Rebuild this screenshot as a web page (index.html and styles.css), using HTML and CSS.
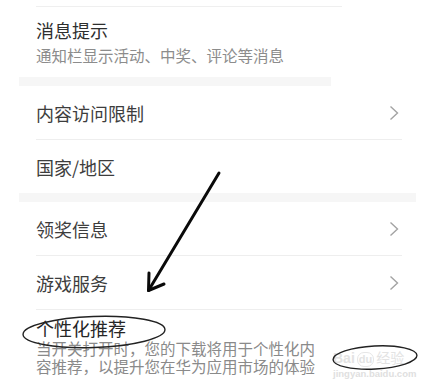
FILE: index.html
```html
<!DOCTYPE html>
<html lang="zh-CN">
<head>
<meta charset="utf-8">
<link rel="stylesheet" href="styles.css">
</head>
<body>
<div class="page">
  <section class="top">
    <div class="top-line"></div>
    <div class="notice">
      <div class="notice-title">消息提示</div>
      <div class="notice-sub">通知栏显示活动、中奖、评论等消息</div>
    </div>
    <div class="top-band"></div>
  </section>

  <section class="group">
    <div class="row"><span class="row-title">内容访问限制</span><svg class="chev" viewBox="0 0 10 16"><path d="M1.5 1.5 L8.5 8 L1.5 14.5"/></svg></div>
    <div class="divider"></div>
    <div class="row"><span class="row-title">国家/地区</span></div>
  </section>
  <div class="band"></div>

  <section class="group">
    <div class="row"><span class="row-title">领奖信息</span><svg class="chev" viewBox="0 0 10 16"><path d="M1.5 1.5 L8.5 8 L1.5 14.5"/></svg></div>
    <div class="divider"></div>
    <div class="row"><span class="row-title">游戏服务</span><svg class="chev" viewBox="0 0 10 16"><path d="M1.5 1.5 L8.5 8 L1.5 14.5"/></svg></div>
    <div class="divider"></div>
    <div class="item">
      <div class="item-title">个性化推荐</div>
      <div class="item-sub">当开关打开时，您的下载将用于个性化内</div>
      <div class="item-sub">容推荐，以提升您在华为应用市场的体验</div>
    </div>
  </section>

  <div class="watermark">
    <div class="wm-logo">Bai<span class="wm-du">du</span><span class="wm-cn">经验</span></div>
    <div class="wm-url">jingyan.baidu.com</div>
  </div>

  <svg class="annot" viewBox="0 0 442 390" width="442" height="390">
    <path d="M219 167 L148.5 284.5" />
    <path d="M149 267 L148.5 284.5 L164 278" />
    <ellipse cx="94" cy="326" rx="71" ry="15.5" transform="rotate(-2 94 326)" class="thin"/>
    <ellipse cx="375" cy="351.5" rx="42" ry="11.5" transform="rotate(-3 375 351.5)" class="thin"/>
  </svg>
</div>
</body>
</html>
```

FILE: styles.css
```css
html, body {
  margin: 0;
  padding: 0;
  background: #ffffff;
}
body {
  font-family: "Noto Sans CJK SC", "Noto Sans", sans-serif;
  width: 442px;
  height: 390px;
  overflow: hidden;
}
.page {
  position: relative;
  width: 442px;
  height: 390px;
}
.top-line {
  margin-left: 36px;
  margin-top: 6px;
  width: 306px;
  height: 1px;
  background: #efefef;
}
.notice {
  padding: 12px 0 11px 36px;
}
.notice-title {
  font-size: 18px;
  line-height: 22px;
  color: #2e2e2e;
}
.notice-sub {
  margin-top: 3px;
  font-size: 15.5px;
  line-height: 22px;
  color: #8c8c8c;
}
.top-band {
  margin-left: 19px;
  width: 312px;
  height: 9px;
  background: #f6f6f6;
}
.group {
  margin-left: 36px;
  width: 366px;
}
.row {
  height: 53px;
  display: flex;
  align-items: center;
  justify-content: space-between;
}
.row-title {
  font-size: 18px;
  line-height: 22px;
  color: #3d3d3d;
}
.chev {
  width: 10px;
  height: 16px;
  margin-right: 3px;
  fill: none;
  stroke: #a3a3a3;
  stroke-width: 1.4;
}
.divider {
  height: 1px;
  background: #eeeeee;
}
.band {
  margin-left: 19px;
  width: 397px;
  height: 9px;
  background: #f6f6f6;
}
.item {
  padding-top: 10px;
}
.item-title {
  font-family: "Liberation Sans", "Noto Sans CJK SC", sans-serif;
  font-size: 18px;
  line-height: 21px;
  color: #262626;
}
.item-sub {
  font-family: "Liberation Sans", "Noto Sans CJK SC", sans-serif;
  font-size: 15.5px;
  line-height: 17.5px;
  color: #8a8a8a;
  white-space: nowrap;
}
.watermark {
  position: absolute;
  left: 333px;
  top: 343px;
  width: 86px;
  color: #e3e3e3;
  font-family: "Liberation Sans", "Noto Sans CJK SC", sans-serif;
}
.wm-logo {
  font-size: 14px;
  line-height: 19px;
  font-weight: 700;
  white-space: nowrap;
}
.wm-du {
  display: inline-block;
  border: 1.5px solid #e6e6e6;
  border-radius: 7px;
  padding: 0 1px;
  margin: 0 2px;
  line-height: 13px;
  font-size: 11px;
}
.wm-cn {
  font-size: 14px;
  font-weight: 400;
}
.wm-url {
  font-size: 9.5px;
  line-height: 11px;
  font-weight: 700;
  color: #e0e0e0;
  white-space: nowrap;
}
.annot {
  position: absolute;
  left: 0;
  top: 0;
  fill: none;
  stroke: #0a0a0a;
  stroke-width: 3;
  stroke-linecap: round;
  stroke-linejoin: round;
}
.annot .thin {
  stroke-width: 1.4;
  stroke: #222;
}
```
